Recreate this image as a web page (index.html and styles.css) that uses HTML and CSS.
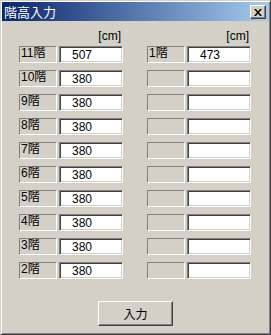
FILE: index.html
```html
<!DOCTYPE html>
<html>
<head>
  <meta charset="UTF-8">
  <title>階高入力</title>
  <link rel="stylesheet" href="styles.css">
</head>
<body>
  <div class="window">
    <div class="titlebar">
      <span class="title">階高入力</span>
      <button class="close-btn">
        <svg width="8" height="7" viewBox="0 0 8 7"><path d="M0 0h2l2 2.5L6 0h2L5 3.5 8 7H6L4 4.5 2 7H0l3-3.5z" fill="#000"/></svg>
      </button>
    </div>

    <div class="content">
      <div class="columns">
        <div class="col">
          <div class="unit">[cm]</div>
          <div class="row"><div class="floor">11階</div><input class="value" value="507"></div>
          <div class="row"><div class="floor">10階</div><input class="value" value="380"></div>
          <div class="row"><div class="floor">9階</div><input class="value" value="380"></div>
          <div class="row"><div class="floor">8階</div><input class="value" value="380"></div>
          <div class="row"><div class="floor">7階</div><input class="value" value="380"></div>
          <div class="row"><div class="floor">6階</div><input class="value" value="380"></div>
          <div class="row"><div class="floor">5階</div><input class="value" value="380"></div>
          <div class="row"><div class="floor">4階</div><input class="value" value="380"></div>
          <div class="row"><div class="floor">3階</div><input class="value" value="380"></div>
          <div class="row"><div class="floor">2階</div><input class="value" value="380"></div>
        </div>
        <div class="col">
          <div class="unit">[cm]</div>
          <div class="row"><div class="floor">1階</div><input class="value" value="473"></div>
          <div class="row"><div class="floor"></div><input class="value"></div>
          <div class="row"><div class="floor"></div><input class="value"></div>
          <div class="row"><div class="floor"></div><input class="value"></div>
          <div class="row"><div class="floor"></div><input class="value"></div>
          <div class="row"><div class="floor"></div><input class="value"></div>
          <div class="row"><div class="floor"></div><input class="value"></div>
          <div class="row"><div class="floor"></div><input class="value"></div>
          <div class="row"><div class="floor"></div><input class="value"></div>
          <div class="row"><div class="floor"></div><input class="value"></div>
        </div>
      </div>

      <div class="actions">
        <button class="submit-btn">入力</button>
      </div>
    </div>
  </div>
</body>
</html>
```

FILE: styles.css
```css
* {
  box-sizing: border-box;
}

body {
  margin: 0;
  width: 271px;
  height: 335px;
  font-family: "Liberation Sans", "Noto Sans CJK JP", sans-serif;
  font-size: 12px;
  color: #000;
  background: #d4d0c8;
}

.window {
  width: 271px;
  height: 335px;
  background: #d4d0c8;
  border: 1px solid;
  border-color: #d4d0c8 #404040 #404040 #d4d0c8;
  box-shadow: inset 1px 1px #fff, inset -1px -1px #808080;
  padding: 1px;
  display: flex;
  flex-direction: column;
}

.titlebar {
  height: 19px;
  display: flex;
  align-items: center;
  justify-content: space-between;
  padding: 0 3px 0 2px;
  background: linear-gradient(to right, #0a246a, #a6caf0);
}

.title {
  color: #fff;
  font-family: "Noto Sans CJK JP", sans-serif;
  font-size: 13px;
  line-height: 19px;
}

.close-btn {
  width: 16px;
  height: 14px;
  padding: 0;
  margin-top: 1px;
  background: #d4d0c8;
  border: 1px solid;
  border-color: #fff #404040 #404040 #fff;
  box-shadow: inset -1px -1px #808080;
  display: flex;
  align-items: center;
  justify-content: center;
}

.content {
  flex: 1;
  display: flex;
  flex-direction: column;
  padding: 8px 0 0 17px;
}

.columns {
  display: flex;
  gap: 24px;
}

.col {
  display: flex;
  flex-direction: column;
  gap: 7px;
  width: 104px;
}

.unit {
  height: 14px;
  line-height: 14px;
  text-align: right;
  padding-right: 2px;
  margin-bottom: -4px;
}

.row {
  display: flex;
  gap: 2px;
  height: 17px;
}

.floor {
  width: 38px;
  height: 17px;
  line-height: 13px;
  padding-left: 1px;
  border: 1px solid;
  border-color: #808080 #fff #fff #808080;
}

.value {
  width: 64px;
  height: 17px;
  margin: 0;
  padding: 0 0 0 12px;
  font: inherit;
  color: #000;
  background: #fff;
  border: 1px solid;
  border-color: #808080 #fff #fff #808080;
  box-shadow: inset 1px 1px #404040, inset -1px -1px #d4d0c8;
  outline: none;
}

.actions {
  display: flex;
  justify-content: center;
  padding: 22px 17px 0 0;
}

.submit-btn {
  width: 75px;
  height: 25px;
  padding: 0;
  font: inherit;
  color: #000;
  background: #d4d0c8;
  border: 1px solid;
  border-color: #fff #404040 #404040 #fff;
  box-shadow: inset -1px -1px #808080;
}
```
